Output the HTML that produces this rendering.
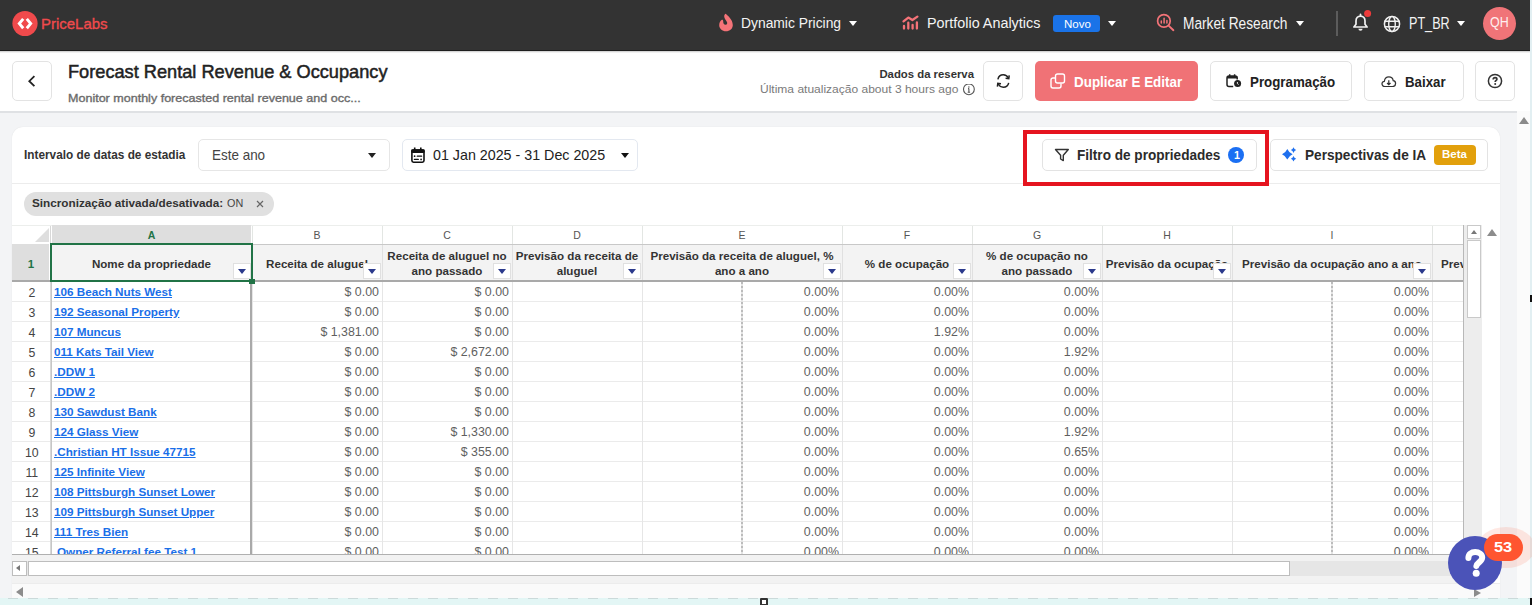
<!DOCTYPE html>
<html><head><meta charset="utf-8">
<style>
*{box-sizing:border-box;margin:0;padding:0}
html,body{width:1532px;height:605px;overflow:hidden}
body{position:relative;background:#f3f4f6;font-family:"Liberation Sans",sans-serif;color:#222}
.a{position:absolute}
.t{position:absolute;white-space:nowrap;line-height:1}
.btn{position:absolute;background:#fff;border:1px solid #e3e3e3;border-radius:5px}
.caret{position:absolute;width:0;height:0;border-left:4.8px solid transparent;border-right:4.8px solid transparent;border-top:5.6px solid #fff}
.flt{position:absolute;width:18px;height:16px;background:#fff;border:1px solid #e0e0e0}
.flt i{position:absolute;left:4px;top:5px;width:0;height:0;border-left:4px solid transparent;border-right:4px solid transparent;border-top:5px solid #2b3a8c}
</style></head>
<body>
<div class="a" style="left:0px;top:0px;width:1530px;height:51px;background:#333333"></div>
<div class="a" style="left:0px;top:50px;width:1530px;height:1px;background:#1e1e1e"></div>
<div class="a" style="left:1530px;top:0px;width:2px;height:605px;background:#e2eff2"></div>
<svg class="a" style="left:12px;top:10px" width="26" height="27" viewBox="0 0 26 27">
  <circle cx="13" cy="13.5" r="12.6" fill="#f04a4c"/>
  <path d="M11.2 8.9 L7.3 13.6 L11.2 18.3" stroke="#fff" stroke-width="2.9" fill="none" stroke-linecap="butt" stroke-linejoin="miter"/>
  <path d="M14.8 8.9 L18.7 13.6 L14.8 18.3" stroke="#fff" stroke-width="2.9" fill="none" stroke-linecap="butt" stroke-linejoin="miter"/>
</svg>
<div class="t" style="left:40.50px;top:16.02px;font-size:15.55px;color:#f04a4c;transform:scaleX(0.9617);transform-origin:0 0;-webkit-text-stroke:0.35px #f04a4c;">PriceLabs</div>
<svg class="a" style="left:714px;top:10px" width="24" height="26" viewBox="0 0 24 26">
  <path d="M11.7 3.8 C13.5 5.5 18.8 9.5 18.8 15 C18.8 18.8 15.8 21.3 12 21.3 C8.2 21.3 5.2 18.4 5.2 15.2 C5.2 12.5 6.5 10.5 7.9 9.8 C8.6 9.5 9.3 10.2 9.2 11.2 C9.1 12.8 9.8 14.8 11.6 14.8 C13.2 14.8 13.6 13.2 12.8 11.8 C11.8 10 10.4 8.5 10.2 6.5 C10.1 5.2 10.9 4.1 11.7 3.8 Z" fill="#f47378"/>
</svg>
<div class="t" style="left:740.90px;top:15.25px;font-size:15.10px;color:#f4f4f4;transform:scaleX(0.9177);transform-origin:0 0;">Dynamic Pricing</div>
<div class="caret" style="left:849px;top:20.5px"></div>
<svg class="a" style="left:898px;top:10px" width="26" height="26" viewBox="0 0 26 26">
  <path d="M5.5 11.4 L10.3 7.6 L14.4 10 L19.4 6.6" stroke="#f47378" stroke-width="2.3" fill="none" stroke-linecap="round" stroke-linejoin="round"/>
  <path d="M6 15.9 V18.5 M10.3 12.7 V18.5 M14.6 14.9 V18.5 M18.9 12.5 V18.5" stroke="#f47378" stroke-width="2.3" stroke-linecap="round"/>
</svg>
<div class="t" style="left:927.30px;top:15.10px;font-size:15.40px;color:#f4f4f4;transform:scaleX(0.9329);transform-origin:0 0;">Portfolio Analytics</div>
<div class="a" style="left:1052.5px;top:14.7px;width:47.700000000000045px;height:17.400000000000002px;background:#1a73e8;border-radius:3px"></div>
<div class="t" style="left:1063.60px;top:18.70px;font-size:11.20px;color:#ffffff;transform:scaleX(1.0290);transform-origin:0 0;">Novo</div>
<div class="caret" style="left:1108px;top:20.5px"></div>
<svg class="a" style="left:1152px;top:8px" width="28" height="28" viewBox="0 0 28 28">
  <circle cx="11.9" cy="12.9" r="6.3" stroke="#f47378" stroke-width="1.7" fill="none"/>
  <path d="M16.6 17.6 L21.4 22.2" stroke="#f47378" stroke-width="1.9" stroke-linecap="round"/>
  <path d="M9.3 13.1 V15.1 M12.1 10.3 V15.1 M14.9 12.4 V15.1" stroke="#f47378" stroke-width="1.5" stroke-linecap="round"/>
</svg>
<div class="t" style="left:1183.20px;top:15.15px;font-size:16.30px;color:#f4f4f4;transform:scaleX(0.8420);transform-origin:0 0;">Market Research</div>
<div class="caret" style="left:1296px;top:20.5px"></div>
<div class="a" style="left:1336px;top:11px;width:1.5px;height:25px;background:#5c5c5c"></div>
<svg class="a" style="left:1346px;top:6px" width="30" height="32" viewBox="0 0 30 32">
  <path d="M7.9 21 L10 18.3 V15 C10 12 12 10.1 14.5 10.1 C17 10.1 19 12 19 15 V18.3 L21.1 21 Z" stroke="#f2f2f2" stroke-width="1.7" fill="none" stroke-linejoin="round"/>
  <path d="M14.5 10 V8.4" stroke="#f2f2f2" stroke-width="1.7" stroke-linecap="round"/>
  <path d="M12.4 22.7 A2.1 2.1 0 0 0 16.6 22.7 Z" fill="#f2f2f2"/>
  <circle cx="21.6" cy="7.4" r="3.5" fill="#ee3b3b"/>
</svg>
<svg class="a" style="left:1383px;top:15px" width="18" height="18" viewBox="0 0 18 18">
  <circle cx="9" cy="9" r="7.6" stroke="#f0f0f0" stroke-width="1.5" fill="none"/>
  <ellipse cx="9" cy="9" rx="3.3" ry="7.6" stroke="#f0f0f0" stroke-width="1.4" fill="none"/>
  <path d="M1.5 6.3 H16.5 M1.5 11.7 H16.5" stroke="#f0f0f0" stroke-width="1.4"/>
</svg>
<div class="t" style="left:1408.60px;top:15.15px;font-size:16.30px;color:#f4f4f4;transform:scaleX(0.7747);transform-origin:0 0;">PT_BR</div>
<div class="caret" style="left:1457px;top:20.5px"></div>
<div class="a" style="left:1483px;top:7.3px;width:33px;height:33.0px;border-radius:50%;background:#f07478"></div>
<div class="t" style="left:1489.80px;top:16.32px;font-size:13.95px;color:#fff0f0;transform:scaleX(0.8937);transform-origin:0 0;">QH</div>
<div class="a" style="left:0px;top:51px;width:1530px;height:60px;background:#fff"></div>
<div class="a" style="left:0px;top:51px;width:1530px;height:2px;background:linear-gradient(rgba(0,0,0,0.22),rgba(0,0,0,0))"></div>
<div class="a" style="left:0px;top:111px;width:1517px;height:2px;background:#dfe1e4"></div>
<div class="btn" style="left:12px;top:61px;width:40px;height:40px"></div>
<svg class="a" style="left:26px;top:74px" width="12" height="14" viewBox="0 0 12 14">
  <path d="M8.4 2.2 L3.3 7.2 L8.4 12.2" stroke="#222" stroke-width="1.8" fill="none"/>
</svg>
<div class="t" style="left:68.10px;top:62.50px;font-size:18.60px;color:#222222;transform:scaleX(0.9782);transform-origin:0 0;-webkit-text-stroke:0.5px #222222;">Forecast Rental Revenue &amp; Occupancy</div>
<div class="t" style="left:68.00px;top:92.62px;font-size:11.35px;color:#6b6b6b;transform:scaleX(1.1050);transform-origin:0 0;-webkit-text-stroke:0.35px #6b6b6b;">Monitor monthly forecasted rental revenue and occ...</div>
<div class="t" style="left:879.40px;top:68.62px;font-size:11.35px;font-weight:bold;color:#333;">Dados da reserva</div>
<div class="t" style="left:760.00px;top:84.40px;font-size:11.80px;color:#7a7a7a;transform:scaleX(1.0184);transform-origin:0 0;">Última atualização about 3 hours ago</div>
<svg class="a" style="left:962px;top:84px" width="14" height="12" viewBox="0 0 14 12">
  <circle cx="6.9" cy="5.3" r="5.4" stroke="#555" stroke-width="1.1" fill="none"/>
  <path d="M6.9 4.6 V8.2 M5.7 8.3 H8.1 M6 4.6 H6.9" stroke="#555" stroke-width="1.1"/><circle cx="6.9" cy="2.9" r="0.75" fill="#555"/>
</svg>
<div class="btn" style="left:983px;top:61px;width:40px;height:40px"></div>
<svg class="a" style="left:995px;top:73px" width="16" height="16" viewBox="0 0 16 16">
  <path d="M2.9 6.3 C3.5 3.6 5.8 1.8 8.3 1.8 C10.5 1.8 12.3 3 13.4 5" stroke="#222" stroke-width="1.5" fill="none"/>
  <path d="M14.2 2.3 L13.8 5.6 L10.6 5.2" stroke="#222" stroke-width="1.5" fill="none" stroke-linejoin="miter"/>
  <path d="M13.7 9.8 C13.1 12.5 10.8 14.2 8.3 14.2 C6.1 14.2 4.3 13 3.2 11" stroke="#222" stroke-width="1.5" fill="none"/>
  <path d="M2.4 13.7 L2.8 10.4 L6 10.8" stroke="#222" stroke-width="1.5" fill="none" stroke-linejoin="miter"/>
</svg>
<div class="a" style="left:1035px;top:61px;width:163px;height:40px;background:#f07276;border-radius:5px"></div>
<svg class="a" style="left:1050px;top:73px" width="16" height="16" viewBox="0 0 16 16">
  <rect x="5.5" y="1" width="9" height="9" rx="2" stroke="#fff" stroke-width="1.4" fill="none"/>
  <path d="M5 5 H3 C1.9 5 1 5.9 1 7 V13 C1 14.1 1.9 15 3 15 H9 C10.1 15 11 14.1 11 13 V10.5" stroke="#fff" stroke-width="1.4" fill="none"/>
</svg>
<div class="t" style="left:1073.70px;top:74.17px;font-size:15.25px;font-weight:bold;color:#ffffff;transform:scaleX(0.8805);transform-origin:0 0;">Duplicar E Editar</div>
<div class="btn" style="left:1210px;top:61px;width:142px;height:40px"></div>
<svg class="a" style="left:1220px;top:68px" width="30" height="26" viewBox="0 0 30 26">
  <path d="M13.2 18.6 H9 C7.8 18.6 7 17.8 7 16.6 V10 C7 8.8 7.8 8 9 8 H15.2 C16.4 8 17.2 8.8 17.2 10 V11.6" stroke="#222" stroke-width="1.5" fill="none"/>
  <path d="M7 8.6 C7 8.2 7.6 7.9 9 7.9 H15.2 C16.6 7.9 17.2 8.2 17.2 8.6 V10.6 H7 Z" fill="#222"/>
  <path d="M9.7 6.3 V8.2 M14.6 6.3 V8.2" stroke="#222" stroke-width="1.5"/>
  <circle cx="17.6" cy="15.5" r="3.5" fill="#222"/>
  <path d="M17.4 14 V15.6 L18.6 16.5" stroke="#fff" stroke-width="0.9" fill="none"/>
</svg>
<div class="t" style="left:1249.60px;top:74.02px;font-size:15.55px;font-weight:bold;color:#222;transform:scaleX(0.8562);transform-origin:0 0;">Programação</div>
<div class="btn" style="left:1364px;top:61px;width:100px;height:40px"></div>
<svg class="a" style="left:1381.3px;top:75.6px" width="15.4" height="11.5" viewBox="0 0 16 12">
  <path d="M4 11 C2.2 11 1 9.8 1 8.2 C1 6.7 2.1 5.6 3.5 5.5 C3.8 3 5.7 1 8.2 1 C10.5 1 12.3 2.6 12.7 4.8 C14.3 5 15.2 6.3 15.2 7.8 C15.2 9.6 13.9 11 12 11 Z" stroke="#333" stroke-width="1.3" fill="none"/>
  <path d="M8.1 4.5 V9 M6.3 7.3 L8.1 9.1 L9.9 7.3" stroke="#333" stroke-width="1.3" fill="none"/>
</svg>
<div class="t" style="left:1404.80px;top:74.02px;font-size:15.55px;font-weight:bold;color:#222;transform:scaleX(0.8538);transform-origin:0 0;">Baixar</div>
<div class="btn" style="left:1475px;top:61px;width:40px;height:40px"></div>
<svg class="a" style="left:1487px;top:73px" width="16" height="16" viewBox="0 0 16 16">
  <circle cx="8" cy="8" r="6.6" stroke="#333" stroke-width="1.5" fill="none"/>
  <path d="M6.2 6.5 C6.2 5.3 7 4.6 8.1 4.6 C9.2 4.6 9.9 5.3 9.9 6.2 C9.9 7.3 8.2 7.5 8.2 8.9" stroke="#333" stroke-width="1.7" fill="none"/>
  <circle cx="8.2" cy="11.1" r="1" fill="#333"/>
</svg>
<div class="a" style="left:1517px;top:111px;width:13px;height:487px;background:#fbfbfb"></div>
<div class="a" style="left:1519px;top:117px;width:0;height:0;border-left:5px solid transparent;border-right:5px solid transparent;border-bottom:7px solid #8a8a8a"></div>
<div class="a" style="left:12px;top:127px;width:1488px;height:493px;background:#fff;border-radius:11px;box-shadow:0 0 1px rgba(0,0,0,0.12)"></div>
<div class="t" style="left:24.20px;top:148.98px;font-size:12.65px;font-weight:bold;color:#333;transform:scaleX(0.9339);transform-origin:0 0;">Intervalo de datas de estadia</div>
<div class="btn" style="left:198px;top:139px;width:192px;height:32px;border-color:#e6e6e6"></div>
<div class="t" style="left:211.50px;top:147.03px;font-size:15.55px;color:#444;transform:scaleX(0.8652);transform-origin:0 0;">Este ano</div>
<div class="caret" style="left:368px;top:153px;border-top-color:#222;border-left-width:4.8px;border-right-width:4.8px;border-top-width:5.5px"></div>
<div class="btn" style="left:402px;top:139px;width:236px;height:32px;border-color:#e3e8f0"></div>
<svg class="a" style="left:404px;top:142px" width="32" height="26" viewBox="0 0 32 26">
  <rect x="7.9" y="8.1" width="12.1" height="12.1" rx="1.6" stroke="#111" stroke-width="1.6" fill="none"/>
  <rect x="7.1" y="7.3" width="13.7" height="3.6" rx="1.4" fill="#111"/>
  <path d="M10.7 5.4 V8 M16.8 5.4 V8" stroke="#111" stroke-width="1.6"/>
  <path d="M13.3 14.2 H17.6 M10.4 17.4 H14.3" stroke="#111" stroke-width="1.3" stroke-linecap="round"/><circle cx="10.6" cy="14.2" r="0.85" fill="#111"/><circle cx="17.1" cy="17.4" r="0.85" fill="#111"/>
</svg>
<div class="t" style="left:433.30px;top:147.03px;font-size:15.55px;color:#222;transform:scaleX(0.9179);transform-origin:0 0;">01 Jan 2025 - 31 Dec 2025</div>
<div class="caret" style="left:621px;top:153px;border-top-color:#111;border-left-width:4.5px;border-right-width:4.5px;border-top-width:5.2px"></div>
<div class="btn" style="left:1042px;top:139px;width:215px;height:32px"></div>
<svg class="a" style="left:1054px;top:148px" width="16" height="14" viewBox="0 0 16 14">
  <path d="M1.5 1.5 H14.3 L9.3 7.3 V12.6 L6.6 11 V7.3 Z" stroke="#333" stroke-width="1.4" fill="none" stroke-linejoin="round"/>
</svg>
<div class="t" style="left:1077.00px;top:147.18px;font-size:15.25px;font-weight:bold;color:#2b2b2b;transform:scaleX(0.8907);transform-origin:0 0;">Filtro de propriedades</div>
<div class="a" style="left:1228.4px;top:147.2px;width:15.799999999999955px;height:15.800000000000011px;border-radius:50%;background:#1b6ff3"></div>
<div class="t" style="left:1234.00px;top:149.93px;font-size:10.75px;font-weight:bold;color:#fff;">1</div>
<div class="btn" style="left:1270px;top:139px;width:218px;height:32px"></div>
<svg class="a" style="left:1276px;top:142px" width="26" height="24" viewBox="0 0 26 24">
  <path d="M11.3 7 Q12.9 10.7 16.6 12.3 Q12.9 13.9 11.3 17.6 Q9.7 13.9 6 12.3 Q9.7 10.7 11.3 7 Z" fill="#1f70ee"/>
  <path d="M17.5 5.3 Q18.2 7.4 20.2 8.1 Q18.2 8.8 17.5 10.9 Q16.8 8.8 14.8 8.1 Q16.8 7.4 17.5 5.3 Z" fill="#1f70ee"/>
  <path d="M17.5 13.9 Q18.2 16 20.2 16.7 Q18.2 17.4 17.5 19.5 Q16.8 17.4 14.8 16.7 Q16.8 16 17.5 13.9 Z" fill="#1f70ee"/>
</svg>
<div class="t" style="left:1304.60px;top:148.03px;font-size:14.55px;font-weight:bold;color:#2b2b2b;transform:scaleX(0.9366);transform-origin:0 0;">Perspectivas de IA</div>
<div class="a" style="left:1434px;top:145px;width:42px;height:20px;background:#e2a00c;border-radius:4px"></div>
<div class="t" style="left:1442.20px;top:149.40px;font-size:11.80px;font-weight:bold;color:#fff;transform:scaleX(0.9745);transform-origin:0 0;">Beta</div>
<div class="a" style="left:12px;top:183px;width:1488px;height:1px;background:#ececec"></div>
<div class="a" style="left:1023px;top:130px;width:246px;height:56px;border:4.6px solid #e5141f"></div>
<div class="a" style="left:23.5px;top:192px;width:250.5px;height:24px;background:#e0e0e0;border-radius:12px"></div>
<div class="t" style="left:31.80px;top:196.98px;font-size:11.65px;font-weight:bold;color:#333;transform:scaleX(1.0084);transform-origin:0 0;">Sincronização ativada/desativada:</div>
<div class="t" style="left:226.80px;top:196.98px;font-size:11.65px;color:#444;transform:scaleX(0.9270);transform-origin:0 0;">ON</div>
<svg class="a" style="left:256px;top:200px" width="8" height="8" viewBox="0 0 8 8"><path d="M1 1 L7 7 M7 1 L1 7" stroke="#666" stroke-width="1.2"/></svg>
<div class="a" style="left:12px;top:225px;width:1452px;height:330px;overflow:hidden;background:#fff">
<div class="a" style="left:0px;top:0px;width:1452px;height:1px;background:#eceeec"></div>
<div class="a" style="left:40px;top:0px;width:199px;height:19px;background:#dedede"></div>
<div class="a" style="left:23px;top:3px;width:0;height:0;border-left:14px solid transparent;border-bottom:14px solid #dedede"></div>
<div class="a" style="left:0px;top:19px;width:37px;height:36px;background:#dedede"></div>
<div class="a" style="left:39px;top:19px;width:1413px;height:36px;background:#f3f3f3"></div>
<div class="a" style="left:39px;top:19px;width:1413px;height:1px;background:#c8c8c8"></div>
<div class="a" style="left:0px;top:55px;width:1452px;height:2px;background:#a9a9a9"></div>
<div class="a" style="left:0px;top:76px;width:1452px;height:1px;background:#ebebeb"></div>
<div class="a" style="left:0px;top:96px;width:1452px;height:1px;background:#ebebeb"></div>
<div class="a" style="left:0px;top:116px;width:1452px;height:1px;background:#ebebeb"></div>
<div class="a" style="left:0px;top:136px;width:1452px;height:1px;background:#ebebeb"></div>
<div class="a" style="left:0px;top:156px;width:1452px;height:1px;background:#ebebeb"></div>
<div class="a" style="left:0px;top:176px;width:1452px;height:1px;background:#ebebeb"></div>
<div class="a" style="left:0px;top:196px;width:1452px;height:1px;background:#ebebeb"></div>
<div class="a" style="left:0px;top:216px;width:1452px;height:1px;background:#ebebeb"></div>
<div class="a" style="left:0px;top:236px;width:1452px;height:1px;background:#ebebeb"></div>
<div class="a" style="left:0px;top:256px;width:1452px;height:1px;background:#ebebeb"></div>
<div class="a" style="left:0px;top:276px;width:1452px;height:1px;background:#ebebeb"></div>
<div class="a" style="left:0px;top:296px;width:1452px;height:1px;background:#ebebeb"></div>
<div class="a" style="left:0px;top:316px;width:1452px;height:1px;background:#ebebeb"></div>
<div class="a" style="left:0px;top:336px;width:1452px;height:1px;background:#ebebeb"></div>
<div class="a" style="left:240px;top:1px;width:1px;height:18px;background:#e3e6e3"></div>
<div class="a" style="left:240px;top:20px;width:1px;height:35px;background:#e0e0e0"></div>
<div class="a" style="left:240px;top:57px;width:1px;height:273px;background:#e6e6e6"></div>
<div class="a" style="left:370px;top:1px;width:1px;height:18px;background:#e3e6e3"></div>
<div class="a" style="left:370px;top:20px;width:1px;height:35px;background:#e0e0e0"></div>
<div class="a" style="left:370px;top:57px;width:1px;height:273px;background:#e6e6e6"></div>
<div class="a" style="left:500px;top:1px;width:1px;height:18px;background:#e3e6e3"></div>
<div class="a" style="left:500px;top:20px;width:1px;height:35px;background:#e0e0e0"></div>
<div class="a" style="left:500px;top:57px;width:1px;height:273px;background:#e6e6e6"></div>
<div class="a" style="left:630px;top:1px;width:1px;height:18px;background:#e3e6e3"></div>
<div class="a" style="left:630px;top:20px;width:1px;height:35px;background:#e0e0e0"></div>
<div class="a" style="left:630px;top:57px;width:1px;height:273px;background:#e6e6e6"></div>
<div class="a" style="left:830px;top:1px;width:1px;height:18px;background:#e3e6e3"></div>
<div class="a" style="left:830px;top:20px;width:1px;height:35px;background:#e0e0e0"></div>
<div class="a" style="left:830px;top:57px;width:1px;height:273px;background:#e6e6e6"></div>
<div class="a" style="left:960px;top:1px;width:1px;height:18px;background:#e3e6e3"></div>
<div class="a" style="left:960px;top:20px;width:1px;height:35px;background:#e0e0e0"></div>
<div class="a" style="left:960px;top:57px;width:1px;height:273px;background:#e6e6e6"></div>
<div class="a" style="left:1090px;top:1px;width:1px;height:18px;background:#e3e6e3"></div>
<div class="a" style="left:1090px;top:20px;width:1px;height:35px;background:#e0e0e0"></div>
<div class="a" style="left:1090px;top:57px;width:1px;height:273px;background:#e6e6e6"></div>
<div class="a" style="left:1220px;top:1px;width:1px;height:18px;background:#e3e6e3"></div>
<div class="a" style="left:1220px;top:20px;width:1px;height:35px;background:#e0e0e0"></div>
<div class="a" style="left:1220px;top:57px;width:1px;height:273px;background:#e6e6e6"></div>
<div class="a" style="left:1420px;top:1px;width:1px;height:18px;background:#e3e6e3"></div>
<div class="a" style="left:1420px;top:20px;width:1px;height:35px;background:#e0e0e0"></div>
<div class="a" style="left:1420px;top:57px;width:1px;height:273px;background:#e6e6e6"></div>
<div class="a" style="left:1550px;top:1px;width:1px;height:18px;background:#e3e6e3"></div>
<div class="a" style="left:1550px;top:20px;width:1px;height:35px;background:#e0e0e0"></div>
<div class="a" style="left:1550px;top:57px;width:1px;height:273px;background:#e6e6e6"></div>
<div class="a" style="left:38px;top:1px;width:1px;height:329px;background:#d8d8d8"></div>
<div class="a" style="left:238px;top:57px;width:2px;height:273px;background:#a9a9a9"></div>
<div class="a" style="left:39px;top:57px;width:1px;height:273px;background:#c6c6c6"></div>
<div class="a" style="left:729px;top:57px;width:2px;height:273px;background:repeating-linear-gradient(#bcbcbc 0 2px,#e4e4e4 2px 4px)"></div>
<div class="a" style="left:1319px;top:57px;width:2px;height:273px;background:repeating-linear-gradient(#bcbcbc 0 2px,#e4e4e4 2px 4px)"></div>
<div class="t" style="left:135.71px;top:5.05px;font-size:10.5px;font-weight:bold;color:#217346;">A</div>
<div class="t" style="left:301.50px;top:5.05px;font-size:10.5px;color:#555;">B</div>
<div class="t" style="left:431.21px;top:5.05px;font-size:10.5px;color:#555;">C</div>
<div class="t" style="left:561.21px;top:5.05px;font-size:10.5px;color:#555;">D</div>
<div class="t" style="left:726.50px;top:5.05px;font-size:10.5px;color:#555;">E</div>
<div class="t" style="left:891.79px;top:5.05px;font-size:10.5px;color:#555;">F</div>
<div class="t" style="left:1020.92px;top:5.05px;font-size:10.5px;color:#555;">G</div>
<div class="t" style="left:1151.21px;top:5.05px;font-size:10.5px;color:#555;">H</div>
<div class="t" style="left:1318.54px;top:5.05px;font-size:10.5px;color:#555;">I</div>
<div class="t" style="left:1482.38px;top:5.05px;font-size:10.5px;color:#555;">J</div>
<div class="t" style="left:15.80px;top:33.55px;font-size:11.5px;font-weight:bold;color:#217346;">1</div>
<div class="t" style="left:16.38px;top:62.15px;font-size:12.3px;color:#444;">2</div>
<div class="t" style="left:16.38px;top:82.15px;font-size:12.3px;color:#444;">3</div>
<div class="t" style="left:16.38px;top:102.15px;font-size:12.3px;color:#444;">4</div>
<div class="t" style="left:16.38px;top:122.15px;font-size:12.3px;color:#444;">5</div>
<div class="t" style="left:16.38px;top:142.15px;font-size:12.3px;color:#444;">6</div>
<div class="t" style="left:16.38px;top:162.15px;font-size:12.3px;color:#444;">7</div>
<div class="t" style="left:16.38px;top:182.15px;font-size:12.3px;color:#444;">8</div>
<div class="t" style="left:16.38px;top:202.15px;font-size:12.3px;color:#444;">9</div>
<div class="t" style="left:12.96px;top:222.15px;font-size:12.3px;color:#444;">10</div>
<div class="t" style="left:13.42px;top:242.15px;font-size:12.3px;color:#444;">11</div>
<div class="t" style="left:12.96px;top:262.15px;font-size:12.3px;color:#444;">12</div>
<div class="t" style="left:12.96px;top:282.15px;font-size:12.3px;color:#444;">13</div>
<div class="t" style="left:12.96px;top:302.15px;font-size:12.3px;color:#444;">14</div>
<div class="t" style="left:12.96px;top:322.15px;font-size:12.3px;color:#444;">15</div>
<div class="t" style="left:79.88px;top:32.50px;font-size:11.6px;font-weight:bold;color:#333;">Nome da propriedade</div>
<div class="flt" style="left:221px;top:38px"><i></i></div>
<div class="t" style="left:254.07px;top:32.50px;font-size:11.6px;font-weight:bold;color:#333;">Receita de aluguel</div>
<div class="flt" style="left:351px;top:38px"><i></i></div>
<div class="t" style="left:375.37px;top:24.50px;font-size:11.6px;font-weight:bold;color:#333;">Receita de aluguel no</div>
<div class="t" style="left:399.55px;top:39.50px;font-size:11.6px;font-weight:bold;color:#333;">ano passado</div>
<div class="flt" style="left:481px;top:38px"><i></i></div>
<div class="t" style="left:503.74px;top:24.50px;font-size:11.6px;font-weight:bold;color:#333;">Previsão da receita de</div>
<div class="t" style="left:544.70px;top:39.50px;font-size:11.6px;font-weight:bold;color:#333;">aluguel</div>
<div class="flt" style="left:611px;top:38px"><i></i></div>
<div class="t" style="left:638.45px;top:24.50px;font-size:11.6px;font-weight:bold;color:#333;">Previsão da receita de aluguel, %</div>
<div class="t" style="left:702.93px;top:39.50px;font-size:11.6px;font-weight:bold;color:#333;">ano a ano</div>
<div class="flt" style="left:811px;top:38px"><i></i></div>
<div class="t" style="left:852.78px;top:32.50px;font-size:11.6px;font-weight:bold;color:#333;">% de ocupação</div>
<div class="flt" style="left:941px;top:38px"><i></i></div>
<div class="t" style="left:974.08px;top:24.50px;font-size:11.6px;font-weight:bold;color:#333;">% de ocupação no</div>
<div class="t" style="left:989.55px;top:39.50px;font-size:11.6px;font-weight:bold;color:#333;">ano passado</div>
<div class="flt" style="left:1071px;top:38px"><i></i></div>
<div class="t" style="left:1093.75px;top:32.50px;font-size:11.6px;font-weight:bold;color:#333;">Previsão da ocupação</div>
<div class="flt" style="left:1201px;top:38px"><i></i></div>
<div class="t" style="left:1230.07px;top:32.50px;font-size:11.6px;font-weight:bold;color:#333;">Previsão da ocupação ano a ano</div>
<div class="flt" style="left:1401px;top:38px"><i></i></div>
<div class="t" style="left:1429.00px;top:32.50px;font-size:11.6px;font-weight:bold;color:#333;">Previsão</div>
<div class="t" style="left:42.00px;top:60.95px;font-size:11.7px;font-weight:bold;color:#1a6fe8;text-decoration:underline;">106 Beach Nuts West</div>
<div class="t" style="left:332.53px;top:61.10px;font-size:12.4px;color:#5f5f5f;">$ 0.00</div>
<div class="t" style="left:462.53px;top:61.10px;font-size:12.4px;color:#5f5f5f;">$ 0.00</div>
<div class="t" style="left:791.85px;top:61.10px;font-size:12.4px;color:#5f5f5f;">0.00%</div>
<div class="t" style="left:921.85px;top:61.10px;font-size:12.4px;color:#5f5f5f;">0.00%</div>
<div class="t" style="left:1051.85px;top:61.10px;font-size:12.4px;color:#5f5f5f;">0.00%</div>
<div class="t" style="left:1381.85px;top:61.10px;font-size:12.4px;color:#5f5f5f;">0.00%</div>
<div class="t" style="left:42.00px;top:80.95px;font-size:11.7px;font-weight:bold;color:#1a6fe8;text-decoration:underline;">192 Seasonal Property</div>
<div class="t" style="left:332.53px;top:81.10px;font-size:12.4px;color:#5f5f5f;">$ 0.00</div>
<div class="t" style="left:462.53px;top:81.10px;font-size:12.4px;color:#5f5f5f;">$ 0.00</div>
<div class="t" style="left:791.85px;top:81.10px;font-size:12.4px;color:#5f5f5f;">0.00%</div>
<div class="t" style="left:921.85px;top:81.10px;font-size:12.4px;color:#5f5f5f;">0.00%</div>
<div class="t" style="left:1051.85px;top:81.10px;font-size:12.4px;color:#5f5f5f;">0.00%</div>
<div class="t" style="left:1381.85px;top:81.10px;font-size:12.4px;color:#5f5f5f;">0.00%</div>
<div class="t" style="left:42.00px;top:100.95px;font-size:11.7px;font-weight:bold;color:#1a6fe8;text-decoration:underline;">107 Muncus</div>
<div class="t" style="left:308.39px;top:101.10px;font-size:12.4px;color:#5f5f5f;">$ 1,381.00</div>
<div class="t" style="left:462.53px;top:101.10px;font-size:12.4px;color:#5f5f5f;">$ 0.00</div>
<div class="t" style="left:791.85px;top:101.10px;font-size:12.4px;color:#5f5f5f;">0.00%</div>
<div class="t" style="left:921.85px;top:101.10px;font-size:12.4px;color:#5f5f5f;">1.92%</div>
<div class="t" style="left:1051.85px;top:101.10px;font-size:12.4px;color:#5f5f5f;">0.00%</div>
<div class="t" style="left:1381.85px;top:101.10px;font-size:12.4px;color:#5f5f5f;">0.00%</div>
<div class="t" style="left:42.00px;top:120.95px;font-size:11.7px;font-weight:bold;color:#1a6fe8;text-decoration:underline;">011 Kats Tail View</div>
<div class="t" style="left:332.53px;top:121.10px;font-size:12.4px;color:#5f5f5f;">$ 0.00</div>
<div class="t" style="left:438.39px;top:121.10px;font-size:12.4px;color:#5f5f5f;">$ 2,672.00</div>
<div class="t" style="left:791.85px;top:121.10px;font-size:12.4px;color:#5f5f5f;">0.00%</div>
<div class="t" style="left:921.85px;top:121.10px;font-size:12.4px;color:#5f5f5f;">0.00%</div>
<div class="t" style="left:1051.85px;top:121.10px;font-size:12.4px;color:#5f5f5f;">1.92%</div>
<div class="t" style="left:1381.85px;top:121.10px;font-size:12.4px;color:#5f5f5f;">0.00%</div>
<div class="t" style="left:42.00px;top:140.95px;font-size:11.7px;font-weight:bold;color:#1a6fe8;text-decoration:underline;">.DDW 1</div>
<div class="t" style="left:332.53px;top:141.10px;font-size:12.4px;color:#5f5f5f;">$ 0.00</div>
<div class="t" style="left:462.53px;top:141.10px;font-size:12.4px;color:#5f5f5f;">$ 0.00</div>
<div class="t" style="left:791.85px;top:141.10px;font-size:12.4px;color:#5f5f5f;">0.00%</div>
<div class="t" style="left:921.85px;top:141.10px;font-size:12.4px;color:#5f5f5f;">0.00%</div>
<div class="t" style="left:1051.85px;top:141.10px;font-size:12.4px;color:#5f5f5f;">0.00%</div>
<div class="t" style="left:1381.85px;top:141.10px;font-size:12.4px;color:#5f5f5f;">0.00%</div>
<div class="t" style="left:42.00px;top:160.95px;font-size:11.7px;font-weight:bold;color:#1a6fe8;text-decoration:underline;">.DDW 2</div>
<div class="t" style="left:332.53px;top:161.10px;font-size:12.4px;color:#5f5f5f;">$ 0.00</div>
<div class="t" style="left:462.53px;top:161.10px;font-size:12.4px;color:#5f5f5f;">$ 0.00</div>
<div class="t" style="left:791.85px;top:161.10px;font-size:12.4px;color:#5f5f5f;">0.00%</div>
<div class="t" style="left:921.85px;top:161.10px;font-size:12.4px;color:#5f5f5f;">0.00%</div>
<div class="t" style="left:1051.85px;top:161.10px;font-size:12.4px;color:#5f5f5f;">0.00%</div>
<div class="t" style="left:1381.85px;top:161.10px;font-size:12.4px;color:#5f5f5f;">0.00%</div>
<div class="t" style="left:42.00px;top:180.95px;font-size:11.7px;font-weight:bold;color:#1a6fe8;text-decoration:underline;">130 Sawdust Bank</div>
<div class="t" style="left:332.53px;top:181.10px;font-size:12.4px;color:#5f5f5f;">$ 0.00</div>
<div class="t" style="left:462.53px;top:181.10px;font-size:12.4px;color:#5f5f5f;">$ 0.00</div>
<div class="t" style="left:791.85px;top:181.10px;font-size:12.4px;color:#5f5f5f;">0.00%</div>
<div class="t" style="left:921.85px;top:181.10px;font-size:12.4px;color:#5f5f5f;">0.00%</div>
<div class="t" style="left:1051.85px;top:181.10px;font-size:12.4px;color:#5f5f5f;">0.00%</div>
<div class="t" style="left:1381.85px;top:181.10px;font-size:12.4px;color:#5f5f5f;">0.00%</div>
<div class="t" style="left:42.00px;top:200.95px;font-size:11.7px;font-weight:bold;color:#1a6fe8;text-decoration:underline;">124 Glass View</div>
<div class="t" style="left:332.53px;top:201.10px;font-size:12.4px;color:#5f5f5f;">$ 0.00</div>
<div class="t" style="left:438.39px;top:201.10px;font-size:12.4px;color:#5f5f5f;">$ 1,330.00</div>
<div class="t" style="left:791.85px;top:201.10px;font-size:12.4px;color:#5f5f5f;">0.00%</div>
<div class="t" style="left:921.85px;top:201.10px;font-size:12.4px;color:#5f5f5f;">0.00%</div>
<div class="t" style="left:1051.85px;top:201.10px;font-size:12.4px;color:#5f5f5f;">1.92%</div>
<div class="t" style="left:1381.85px;top:201.10px;font-size:12.4px;color:#5f5f5f;">0.00%</div>
<div class="t" style="left:42.00px;top:220.95px;font-size:11.7px;font-weight:bold;color:#1a6fe8;text-decoration:underline;">.Christian HT Issue 47715</div>
<div class="t" style="left:332.53px;top:221.10px;font-size:12.4px;color:#5f5f5f;">$ 0.00</div>
<div class="t" style="left:448.73px;top:221.10px;font-size:12.4px;color:#5f5f5f;">$ 355.00</div>
<div class="t" style="left:791.85px;top:221.10px;font-size:12.4px;color:#5f5f5f;">0.00%</div>
<div class="t" style="left:921.85px;top:221.10px;font-size:12.4px;color:#5f5f5f;">0.00%</div>
<div class="t" style="left:1051.85px;top:221.10px;font-size:12.4px;color:#5f5f5f;">0.65%</div>
<div class="t" style="left:1381.85px;top:221.10px;font-size:12.4px;color:#5f5f5f;">0.00%</div>
<div class="t" style="left:42.00px;top:240.95px;font-size:11.7px;font-weight:bold;color:#1a6fe8;text-decoration:underline;">125 Infinite View</div>
<div class="t" style="left:332.53px;top:241.10px;font-size:12.4px;color:#5f5f5f;">$ 0.00</div>
<div class="t" style="left:462.53px;top:241.10px;font-size:12.4px;color:#5f5f5f;">$ 0.00</div>
<div class="t" style="left:791.85px;top:241.10px;font-size:12.4px;color:#5f5f5f;">0.00%</div>
<div class="t" style="left:921.85px;top:241.10px;font-size:12.4px;color:#5f5f5f;">0.00%</div>
<div class="t" style="left:1051.85px;top:241.10px;font-size:12.4px;color:#5f5f5f;">0.00%</div>
<div class="t" style="left:1381.85px;top:241.10px;font-size:12.4px;color:#5f5f5f;">0.00%</div>
<div class="t" style="left:42.00px;top:260.95px;font-size:11.7px;font-weight:bold;color:#1a6fe8;text-decoration:underline;">108 Pittsburgh Sunset Lower</div>
<div class="t" style="left:332.53px;top:261.10px;font-size:12.4px;color:#5f5f5f;">$ 0.00</div>
<div class="t" style="left:462.53px;top:261.10px;font-size:12.4px;color:#5f5f5f;">$ 0.00</div>
<div class="t" style="left:791.85px;top:261.10px;font-size:12.4px;color:#5f5f5f;">0.00%</div>
<div class="t" style="left:921.85px;top:261.10px;font-size:12.4px;color:#5f5f5f;">0.00%</div>
<div class="t" style="left:1051.85px;top:261.10px;font-size:12.4px;color:#5f5f5f;">0.00%</div>
<div class="t" style="left:1381.85px;top:261.10px;font-size:12.4px;color:#5f5f5f;">0.00%</div>
<div class="t" style="left:42.00px;top:280.95px;font-size:11.7px;font-weight:bold;color:#1a6fe8;text-decoration:underline;">109 Pittsburgh Sunset Upper</div>
<div class="t" style="left:332.53px;top:281.10px;font-size:12.4px;color:#5f5f5f;">$ 0.00</div>
<div class="t" style="left:462.53px;top:281.10px;font-size:12.4px;color:#5f5f5f;">$ 0.00</div>
<div class="t" style="left:791.85px;top:281.10px;font-size:12.4px;color:#5f5f5f;">0.00%</div>
<div class="t" style="left:921.85px;top:281.10px;font-size:12.4px;color:#5f5f5f;">0.00%</div>
<div class="t" style="left:1051.85px;top:281.10px;font-size:12.4px;color:#5f5f5f;">0.00%</div>
<div class="t" style="left:1381.85px;top:281.10px;font-size:12.4px;color:#5f5f5f;">0.00%</div>
<div class="t" style="left:42.00px;top:300.95px;font-size:11.7px;font-weight:bold;color:#1a6fe8;text-decoration:underline;">111 Tres Bien</div>
<div class="t" style="left:332.53px;top:301.10px;font-size:12.4px;color:#5f5f5f;">$ 0.00</div>
<div class="t" style="left:462.53px;top:301.10px;font-size:12.4px;color:#5f5f5f;">$ 0.00</div>
<div class="t" style="left:791.85px;top:301.10px;font-size:12.4px;color:#5f5f5f;">0.00%</div>
<div class="t" style="left:921.85px;top:301.10px;font-size:12.4px;color:#5f5f5f;">0.00%</div>
<div class="t" style="left:1051.85px;top:301.10px;font-size:12.4px;color:#5f5f5f;">0.00%</div>
<div class="t" style="left:1381.85px;top:301.10px;font-size:12.4px;color:#5f5f5f;">0.00%</div>
<div class="t" style="left:45.00px;top:320.95px;font-size:11.7px;font-weight:bold;color:#1a6fe8;text-decoration:underline;">Owner Referral fee Test 1</div>
<div class="t" style="left:332.53px;top:321.10px;font-size:12.4px;color:#5f5f5f;">$ 0.00</div>
<div class="t" style="left:462.53px;top:321.10px;font-size:12.4px;color:#5f5f5f;">$ 0.00</div>
<div class="t" style="left:791.85px;top:321.10px;font-size:12.4px;color:#5f5f5f;">0.00%</div>
<div class="t" style="left:921.85px;top:321.10px;font-size:12.4px;color:#5f5f5f;">0.00%</div>
<div class="t" style="left:1051.85px;top:321.10px;font-size:12.4px;color:#5f5f5f;">0.00%</div>
<div class="t" style="left:1381.85px;top:321.10px;font-size:12.4px;color:#5f5f5f;">0.00%</div>
<div class="a" style="left:38px;top:18px;width:203px;height:39px;border:2px solid #217346"></div>
<div class="a" style="left:237px;top:54px;width:6px;height:5px;background:#217346"></div>
<div class="a" style="left:0px;top:329px;width:1452px;height:1px;background:#b0b0b0"></div>
</div>
<div class="a" style="left:1463px;top:225px;width:1px;height:330px;background:#b8b8b8"></div>
<div class="a" style="left:1464px;top:225px;width:18px;height:330px;background:#ededed"></div>
<div class="a" style="left:1467px;top:225px;width:14px;height:14px;background:#fff;border:1px solid #c9c9c9"></div>
<div class="a" style="left:1470.5px;top:230px;width:0;height:0;border-left:3.5px solid transparent;border-right:3.5px solid transparent;border-bottom:4px solid #777"></div>
<div class="a" style="left:1467px;top:240px;width:14px;height:78px;background:#fff;border:1px solid #c9c9c9"></div>
<div class="a" style="left:1487px;top:229px;width:0;height:0;border-left:5.5px solid transparent;border-right:5.5px solid transparent;border-bottom:7px solid #8c8c8c"></div>
<div class="a" style="left:12px;top:555px;width:1452px;height:28px;background:#f2f2f2"></div>
<div class="a" style="left:12px;top:561px;width:1452px;height:15px;background:#e6e6e6"></div>
<div class="a" style="left:12px;top:561px;width:15px;height:15px;background:#fff;border:1px solid #bdbdbd"></div>
<div class="a" style="left:16px;top:565px;width:0;height:0;border-top:3.5px solid transparent;border-bottom:3.5px solid transparent;border-right:4px solid #777"></div>
<div class="a" style="left:28px;top:561px;width:1262px;height:15px;background:#fff;border:1px solid #bdbdbd"></div>
<div class="a" style="left:12px;top:583px;width:1488px;height:1px;background:#ececec"></div>
<div class="a" style="left:12px;top:584px;width:1488px;height:14px;background:#fafafa"></div>
<div class="a" style="left:16px;top:587px;width:0;height:0;border-top:5px solid transparent;border-bottom:5px solid transparent;border-right:7.5px solid #8c8c8c"></div>
<div class="a" style="left:1474px;top:589px;width:0;height:0;border-top:4px solid transparent;border-bottom:4px solid transparent;border-left:7px solid #8c8c8c"></div>
<div class="a" style="left:1477px;top:527px;width:58px;height:41px;border-radius:50%;background:rgba(255,90,60,0.14)"></div>
<div class="a" style="left:1448px;top:536px;width:54px;height:54px;border-radius:50%;background:#4b53b8"></div>
<svg class="a" style="left:1463px;top:547px" width="24" height="32" viewBox="0 0 24 32">
  <path d="M5.4 11 C5.4 7 8.4 5 12.2 5 C16 5 19.2 7.2 19.2 10.6 C19.2 14.6 14.2 15.2 13.4 19" stroke="#fff" stroke-width="6" fill="none" stroke-linecap="round"/>
  <circle cx="13.2" cy="26.3" r="3.5" fill="#fff"/>
</svg>
<div class="a" style="left:1484px;top:534px;width:39px;height:27px;border-radius:14px;background:#ff5530"></div>
<div class="t" style="left:1493.70px;top:539.25px;font-size:15.10px;font-weight:bold;color:#fff;transform:scaleX(1.0839);transform-origin:0 0;">53</div>
<div class="a" style="left:0px;top:598px;width:1530px;height:7px;background:#e3f6f5"></div>
<div class="a" style="left:0;top:598px;width:1530px;height:1px;background:repeating-linear-gradient(90deg,transparent 0 8px,#cbdada 8px 18px,transparent 18px 20px)"></div>
<div class="a" style="left:760px;top:598px;width:8px;height:8px;border:2px solid #333;background:#fff;border-radius:1px"></div>
<div class="a" style="left:1530px;top:295px;width:8px;height:7px;border:2px solid #111;background:#fff"></div>
<div class="a" style="left:1530px;top:598px;width:8px;height:8px;border:2px solid #111;background:#fff"></div>
</body></html>
